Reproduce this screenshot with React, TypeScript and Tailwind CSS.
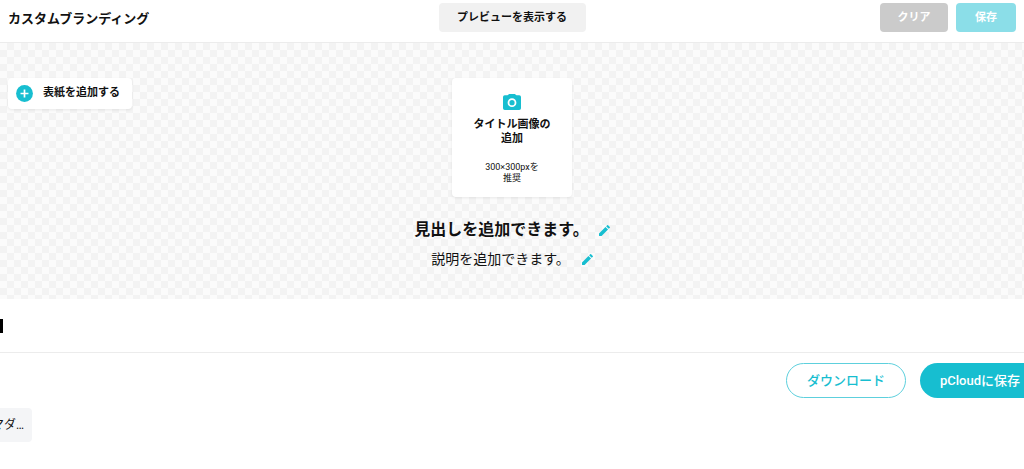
type IconProps = { className?: string };

function CameraIcon({ className }: IconProps) {
  return (
    <svg viewBox="0 0 18 16" className={className} fill="currentColor" aria-hidden="true">
      <path
        fillRule="evenodd"
        d="M6.2 0h5.6l1.7 1.3h2.7A1.8 1.8 0 0 1 18 3.1v11.1a1.8 1.8 0 0 1-1.8 1.8H1.8A1.8 1.8 0 0 1 0 14.200V3.100a1.8 1.8 0 0 1 1.8-1.800h2.700zM9 4.300a4.400 4.400 0 1 0 0 8.800 4.400 4.400 0 0 0 0-8.800z"
      />
      <circle cx="9" cy="8.700" r="2.600" />
    </svg>
  );
}

function PencilIcon({ className }: IconProps) {
  return (
    <svg viewBox="3 3 18 18" className={className} fill="currentColor" aria-hidden="true">
      <path d="M3 16.800V20a1 1 0 0 0 1 1h3.200L17.810 10.400l-4.200-4.200L3 16.800zM20.710 7.500a1 1 0 0 0 0-1.410l-2.800-2.800a1 1 0 0 0-1.410 0l-1.830 1.830 4.200 4.200 1.830-1.830z" />
    </svg>
  );
}

function PlusCircleIcon({ className }: IconProps) {
  return (
    <svg viewBox="0 0 18 18" className={className} aria-hidden="true">
      <circle cx="9" cy="9" r="8.900" fill="currentColor" />
      <path d="M9 4.800v8.400M4.800 9h8.400" stroke="#fff" strokeWidth="1.800" />
    </svg>
  );
}

function Header() {
  return (
    <header className="grid h-[43px] grid-cols-[1fr_auto_1fr] items-start border-b border-[#ececec] px-2 pt-[3px]">
      <h1 className="text-[13px] leading-[31px] font-bold">カスタムブランディング</h1>
      <button className="h-[29px] w-[147px] rounded bg-[#f1f1f1] pt-px text-[11px] font-bold">
        プレビューを表示する
      </button>
      <div className="flex justify-end gap-2 text-[11px] font-bold text-white">
        <button className="h-[29px] w-[68px] rounded bg-[#cbcbcb] pt-px">クリア</button>
        <button className="h-[29px] w-[60px] rounded bg-[#8bdee8] pt-px">保存</button>
      </div>
    </header>
  );
}

function Cover() {
  return (
    <section className="grid grid-cols-[1fr_auto_1fr] items-start bg-[#fbfbfb] bg-[conic-gradient(#f3f3f3_25%,#fbfbfb_0_50%,#f3f3f3_0_75%,#fbfbfb_0)] bg-size-[14px_14px] px-2 pt-[35px] pb-7">
      <button className="flex h-[31px] items-center gap-[10px] justify-self-start rounded bg-white pr-3 pl-2 text-[11px] font-bold shadow-[0_1px_3px_rgba(0,0,0,0.08)]">
        <PlusCircleIcon className="size-[17px] text-[#17bed0]" />
        表紙を追加する
      </button>
      <div className="flex flex-col items-center">
        <button className="flex h-[119px] w-[120px] flex-col items-center rounded bg-white pt-4 shadow-[0_1px_3px_rgba(0,0,0,0.08)]">
          <CameraIcon className="h-4 w-[18px] text-[#17bed0]" />
          <span className="mt-2 text-[11px] leading-[14px] font-bold">
            タイトル画像の
            <br />
            追加
          </span>
          <span className="mt-4 text-[9px] leading-[11px]">
            300×300pxを
            <br />
            推奨
          </span>
        </button>
        <div className="mt-5 flex items-center gap-[10px]">
          <h2 className="text-[16px] leading-[26px] font-bold">見出しを追加できます。</h2>
          <button aria-label="見出しを編集" className="text-[#17bed0]">
            <PencilIcon className="size-[11px]" />
          </button>
        </div>
        <div className="mt-1 flex items-center gap-3">
          <p className="text-[14px] leading-6">説明を追加できます。</p>
          <button aria-label="説明を編集" className="text-[#17bed0]">
            <PencilIcon className="size-[11px]" />
          </button>
        </div>
      </div>
    </section>
  );
}

export default function App() {
  return (
    <div className="min-h-screen w-full overflow-hidden bg-white font-[Roboto,'Noto_Sans_CJK_JP',sans-serif] text-[#111]">
      <Header />
      <Cover />
      <main>
        <div className="flex h-[54px] items-center border-b border-[#ececec]">
          <span className="h-[14px] w-[3px] bg-black" />
        </div>
        <div className="-mr-4 flex justify-end gap-[14px] pt-[10px] text-[13px]">
          <button className="h-[35px] w-[120px] rounded-full border border-[#5dd0dd] font-medium text-[#17bed0]">
            ダウンロード
          </button>
          <button className="h-[35px] w-[120px] rounded-full bg-[#17bed0] font-medium text-white">
            pCloudに保存
          </button>
        </div>
        <div className="mt-[10px] flex">
          <button className="-ml-2 h-[34px] rounded bg-[#f4f5f7] pr-2 text-[12px]">マダ…</button>
        </div>
      </main>
    </div>
  );
}
